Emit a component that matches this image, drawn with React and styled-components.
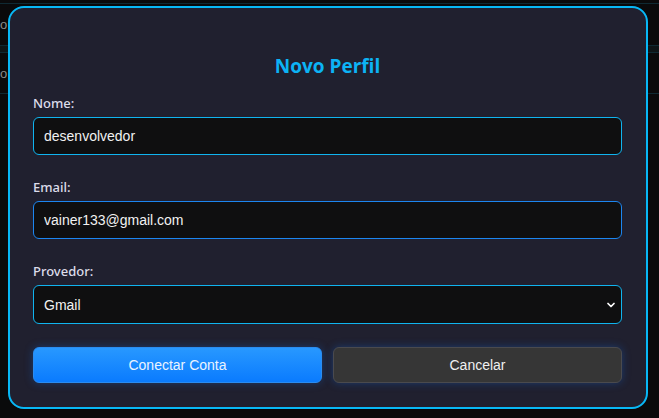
import React from "react";
import styled, { createGlobalStyle } from "styled-components";
import { ChevronDown } from "lucide-react";

const GlobalStyle = createGlobalStyle`
  html, body {
    margin: 0;
    padding: 0;
    background: #0a0a0b;
    height: 100%;
  }
  #root {
    height: 100%;
  }
  * {
    box-sizing: border-box;
  }
`;

const Page = styled.div`
  position: relative;
  width: 659px;
  height: 418px;
  overflow: hidden;
  background: #0a0a0b;
  font-family: "Open Sans", "Noto Sans", sans-serif;
`;

const BackList = styled.div`
  display: flex;
  flex-direction: column;
  padding-top: 3px;
`;

const BackRow = styled.div`
  height: ${(p) => p.h}px;
  border-top: 1px solid #0f2a33;
  color: #8a8a8a;
  font-family: "Liberation Sans", Arial, sans-serif;
  font-size: 13px;
  display: flex;
  align-items: center;
  background: ${(p) => (p.band ? "#0d1517" : "transparent")};
`;

const Overlay = styled.div`
  position: absolute;
  inset: 0;
  padding: 6px 0 0 8px;
`;

const Modal = styled.div`
  width: 640px;
  height: 403px;
  background: #20202f;
  border: 2px solid #08b8f6;
  border-radius: 16px;
  padding: 0 24px 24px 23px;
  display: flex;
  flex-direction: column;
`;

const Title = styled.h2`
  margin: 47px 0 18px;
  text-align: center;
  font-size: 19px;
  line-height: 22px;
  font-weight: 700;
  color: #0cb3f5;
`;

const Field = styled.div`
  display: flex;
  flex-direction: column;
  margin-bottom: 24px;
`;

const Label = styled.label`
  font-family: "Noto Sans", "Open Sans", sans-serif;
  font-size: 13px;
  line-height: 16px;
  font-weight: 500;
  color: #dcdcea;
  margin-bottom: 6px;
`;

const Input = styled.input`
  height: 38px;
  width: 100%;
  background: #0f0f10;
  border: 1px solid ${(p) => (p.focused ? "#1c86f0" : "#10b4ef")};
  border-radius: 6px;
  color: #f2f2f2;
  font-family: "Liberation Sans", Arial, sans-serif;
  font-size: 14px;
  padding: 0 10px;
  outline: none;
`;

const SelectWrap = styled.div`
  position: relative;
`;

const Select = styled.select`
  appearance: none;
  height: 39px;
  width: 100%;
  background: #0f0f10;
  border: 1px solid #10b4ef;
  border-radius: 6px;
  color: #f2f2f2;
  font-family: "Liberation Sans", Arial, sans-serif;
  font-size: 14px;
  padding: 0 10px;
  outline: none;
`;

const Chevron = styled(ChevronDown)`
  position: absolute;
  right: 5px;
  top: 14px;
  color: #ffffff;
  pointer-events: none;
`;

const Actions = styled.div`
  display: grid;
  grid-template-columns: 1fr 1fr;
  gap: 11px;
  margin-top: -1px;
`;

const Button = styled.button`
  height: 36px;
  border-radius: 6px;
  font-family: "Liberation Sans", Arial, sans-serif;
  font-size: 14px;
  cursor: pointer;
  box-shadow: 0 0 8px rgba(20, 110, 230, 0.35);
  color: ${(p) => (p.primary ? "#eaf4ff" : "#f0f0f0")};
  border: 1px solid ${(p) => (p.primary ? "#2b8cf0" : "#4a4a4e")};
  background: ${(p) =>
    p.primary ? "linear-gradient(#2898ff, #0a7bfe)" : "#363636"};
`;

export default function App() {
  return (
    <Page>
      <GlobalStyle />
      <BackList>
        <BackRow h={42}>o</BackRow>
        <BackRow h={7} band />
        <BackRow h={41}>o</BackRow>
        <BackRow h={40} />
      </BackList>
      <Overlay>
        <Modal>
          <Title>Novo Perfil</Title>
          <Field>
            <Label>Nome:</Label>
            <Input defaultValue="desenvolvedor" />
          </Field>
          <Field>
            <Label>Email:</Label>
            <Input focused defaultValue="vainer133@gmail.com" />
          </Field>
          <Field>
            <Label>Provedor:</Label>
            <SelectWrap>
              <Select defaultValue="gmail">
                <option value="gmail">Gmail</option>
                <option value="outlook">Outlook</option>
              </Select>
              <Chevron size={12} strokeWidth={3.5} />
            </SelectWrap>
          </Field>
          <Actions>
            <Button primary>Conectar Conta</Button>
            <Button>Cancelar</Button>
          </Actions>
        </Modal>
      </Overlay>
    </Page>
  );
}
